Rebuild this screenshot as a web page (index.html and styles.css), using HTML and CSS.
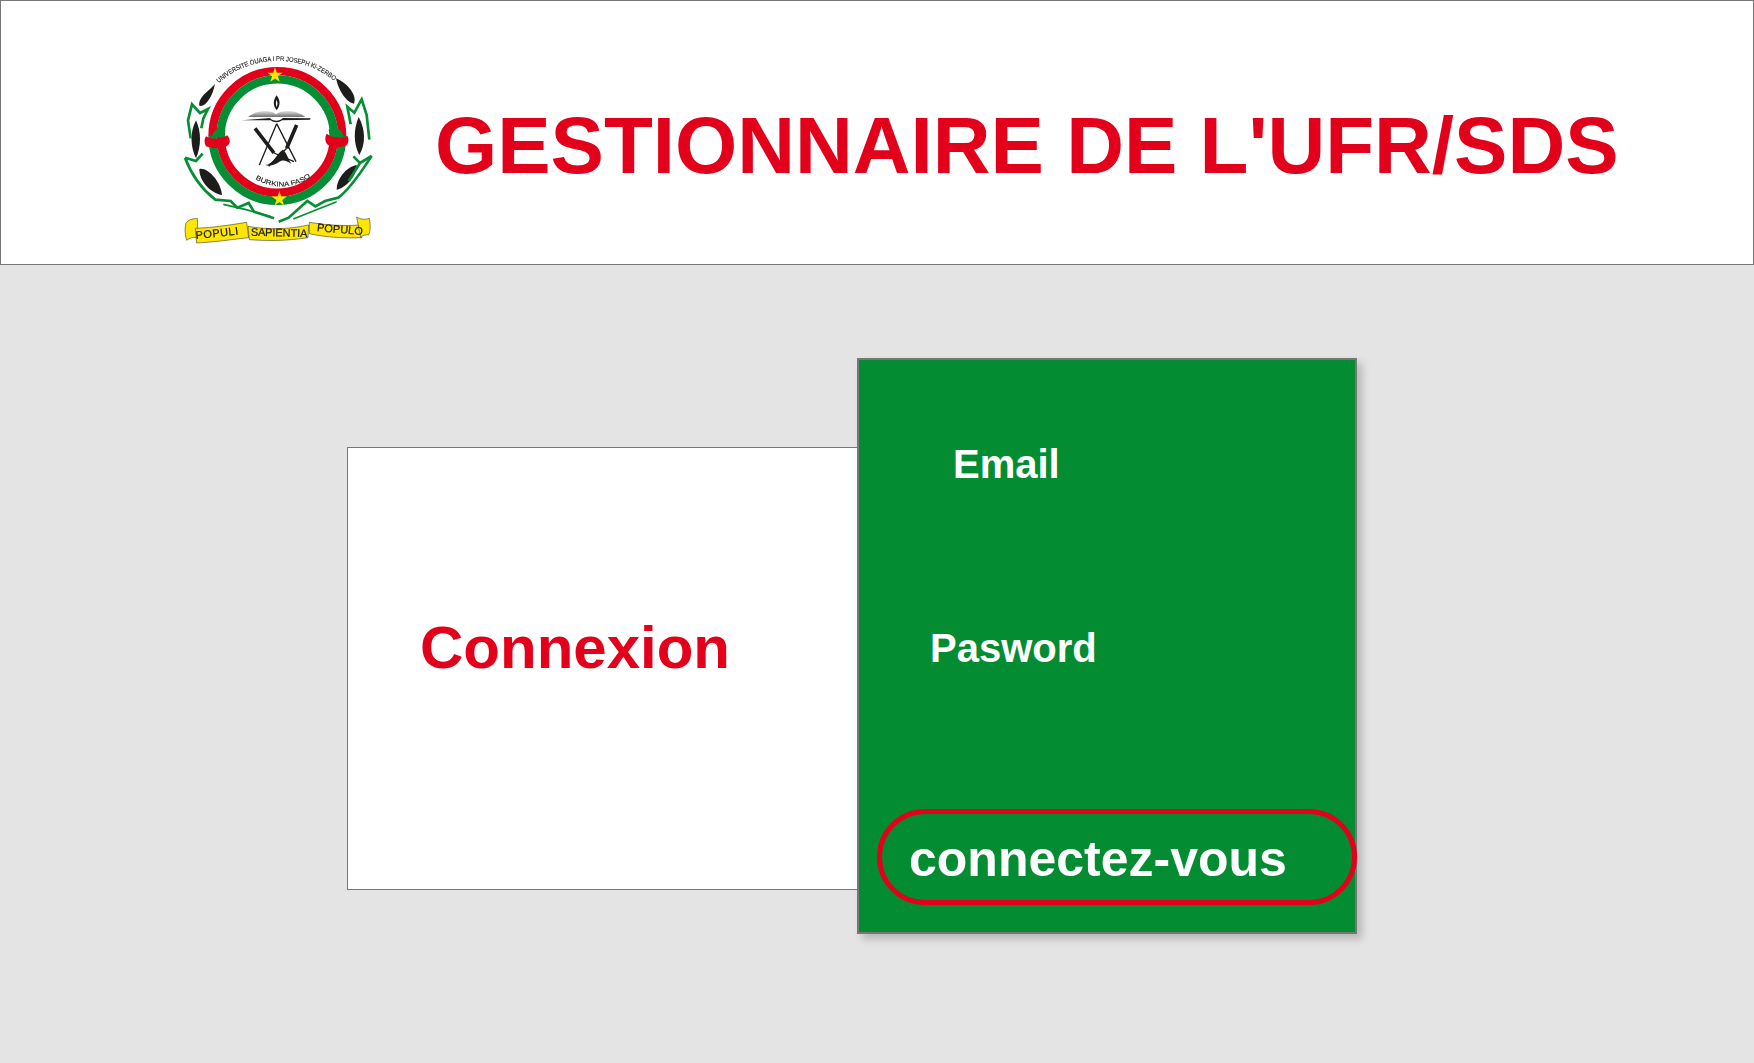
FILE: index.html
```html
<!DOCTYPE html>
<html lang="fr">

<head>
  <meta charset="UTF-8">
  <meta name="viewport" content="width=device-width, initial-scale=1.0">
  <title>Gestionnaire de l'UFR/SDS</title>
  <link rel="stylesheet" href="styles.css">
</head>

<body>
  <div class="header">
    <svg class="logo" viewBox="0 0 660 630" xmlns="http://www.w3.org/2000/svg">
      <defs>
        <path id="arcTop" d="M146 126 A270 270 0 0 1 496 122" />
        <path id="arcBottom" d="M256 414 A150 150 0 0 0 430 402" />
        <polygon id="star" points="0,-24 5.4,-7.4 22.8,-7.4 8.7,2.8 14.1,19.4 0,9.2 -14.1,19.4 -8.7,2.8 -22.8,-7.4 -5.4,-7.4" />
        <linearGradient id="bookGrey" x1="0" y1="0" x2="0" y2="1">
          <stop offset="0" stop-color="#e0e0e0" />
          <stop offset="1" stop-color="#6f6f6f" />
        </linearGradient>
      </defs>

      <!-- ring -->
      <path class="ring-red" d="M127.5 285 A194.5 194.5 0 0 1 516.5 285" />
      <path class="ring-green" d="M152 285 A170 170 0 0 1 492 285" />
      <path class="ring-red" d="M152 285 A170 170 0 0 0 492 285" />
      <path class="ring-green" d="M127.5 285 A194.5 194.5 0 0 0 516.5 285" />
      <use class="star" href="#star" x="315" y="103" />
      <use class="star" href="#star" x="328" y="474" />

      <!-- knots -->
      <path class="green" d="M126 285 C130 268 150 255 166 266 L164 292 Z" />
      <path class="green" d="M520 285 C516 265 494 250 476 266 L480 292 Z" />
      <path class="red" d="M108 286 C125 296 150 296 172 283 C182 294 182 310 170 316 C148 324 122 322 108 316 C102 306 102 294 108 286 Z" />
      <path class="red" d="M470 278 C490 292 512 294 532 284 C538 296 536 310 526 315 C506 320 486 318 474 312 C464 302 464 288 470 278 Z" />

      <!-- book and flame -->
      <path class="ink" d="M320 163 C330 176 333 192 320 208 C307 192 310 176 320 163 Z" />
      <path class="white" d="M320 176 C323 184 323 190 320 198 C317 190 317 184 320 176 Z" />
      <path d="M234 228 C262 206 300 206 318 220 C338 206 378 206 406 228 Z" fill="url(#bookGrey)" />
      <path class="ink" d="M215 238 L300 231 C308 242 330 242 338 231 L422 232 L420 236 L336 238 C328 246 310 246 302 238 Z" />

      <!-- compass and tools -->
      <path class="tool" d="M255 262 L312 336 M380 252 L350 322" />
      <path class="tool-thin" d="M320 248 L268 372 M320 248 L378 362 M312 336 L372 362 M350 322 L296 376" />
      <path class="ink" d="M286 372 C310 370 318 340 338 326 C352 336 352 352 364 368 C350 360 338 354 326 364 C316 372 300 376 286 372 Z" />

      <!-- leaves -->
      <path class="ink" d="M135 128 C122 146 84 166 88 194 C106 200 128 166 135 128 Z" />
      <path class="ink" d="M498 112 C506 150 530 186 552 188 C562 160 530 126 498 112 Z" />
      <path class="ink" d="M78 238 C94 272 94 316 78 352 C60 316 60 272 78 238 Z" />
      <path class="ink" d="M566 228 C586 264 588 308 568 342 C550 308 550 266 566 228 Z" />
      <path class="ink" d="M88 384 C112 378 152 420 156 462 C126 458 88 424 88 384 Z" />
      <path class="ink" d="M560 372 C562 400 530 440 500 446 C500 414 528 378 560 372 Z" />

      <!-- branches -->
      <path class="branch" d="M62 292 L54 238 L66 190 L90 216 L114 204 L100 232 L94 262" />
      <path class="branch" d="M542 250 L532 197 L553 215 L575 175 L590 222 L598 296" />
      <path class="branch" d="M45 350 L78 360 L98 338 M45 350 C60 390 90 440 136 476 L182 480 L202 500 L236 486 L252 512 L312 532" />
      <path class="branch" d="M605 345 C580 382 545 440 505 470 L465 480 L436 496 L412 480 L356 530 L326 542" />
      <path class="branch" d="M605 345 L570 366 L550 346 M570 366 L536 420" />
      <path class="branch-thin" d="M160 490 L228 506 L300 526 M500 482 L430 510 L370 534" />

      <!-- ribbon -->
      <path class="ribbon" d="M48 546 C58 534 68 534 82 532 L84 590 C70 588 58 590 50 598 C44 580 44 562 48 546 Z" />
      <path class="ribbon" d="M76 562 C130 560 180 552 230 544 L236 590 C180 596 130 604 80 606 Z" />
      <path class="ribbon" d="M234 556 C290 566 350 566 416 552 L414 590 C350 600 290 600 238 596 Z" />
      <path class="ribbon" d="M418 544 C470 552 520 556 566 552 L576 590 C530 592 470 590 418 578 Z" />
      <path class="ribbon" d="M560 528 C574 536 586 536 598 532 C602 552 602 570 596 582 C588 580 578 582 572 590 Z" />

      <!-- lettering -->
      <text class="motto-small"><textPath href="#arcTop" textLength="376" lengthAdjust="spacingAndGlyphs">UNIVERSITE OUAGA I PR JOSEPH KI-ZERBO</textPath></text>
      <text class="motto-small"><textPath href="#arcBottom" textLength="176" lengthAdjust="spacingAndGlyphs">BURKINA FASO</textPath></text>
      <text class="motto" x="78" y="594" textLength="128" transform="rotate(-6 78 594)">POPULI</text>
      <text class="motto" x="242" y="584" textLength="170" transform="rotate(1.5 242 584)">SAPIENTIA</text>
      <text class="motto" x="440" y="570" textLength="138" transform="rotate(5 440 570)">POPULO</text>
    </svg>
    <h1>GESTIONNAIRE DE L'UFR/SDS</h1>
  </div>

  <div class="main">
    <div class="intro">
      <h2>Connexion</h2>
    </div>
    <form class="panel">
      <label class="email">Email</label>
      <label class="password">Pasword</label>
      <button class="submit" type="button">connectez-vous</button>
    </form>
  </div>
</body>

</html>
```

FILE: styles.css
```css
html,
body {
  height: 100%;
}

body {
  margin: 0;
  background-color: #e4e4e4;
  font-family: "Liberation Sans", Arial, sans-serif;
  overflow: hidden;
}

.header {
  display: flex;
  align-items: center;
  gap: 45px;
  box-sizing: border-box;
  height: 265px;
  padding: 26px 0 0 169px;
  background: #fff;
  border: 1px solid #777;
}

.logo {
  flex: none;
  width: 220px;
  height: 210px;
  filter: blur(0.35px);
}

.header h1 {
  margin: 0;
  color: #e2001a;
  font-size: 80px;
  font-weight: 700;
  white-space: nowrap;
}

.ring-red {
  fill: none;
  stroke: #e2001a;
  stroke-width: 25;
}

.ring-green {
  fill: none;
  stroke: #058e33;
  stroke-width: 25;
}

.star {
  fill: #ffe600;
}

.red {
  fill: #e2001a;
}

.green {
  fill: #058e33;
}

.ink {
  fill: #1d1d1b;
}

.white {
  fill: #fff;
}

.tool {
  fill: none;
  stroke: #1d1d1b;
  stroke-width: 11;
}

.tool-thin {
  fill: none;
  stroke: #1d1d1b;
  stroke-width: 4;
}

.branch {
  fill: none;
  stroke: #058e33;
  stroke-width: 8;
  stroke-linejoin: miter;
}

.branch-thin {
  fill: none;
  stroke: #058e33;
  stroke-width: 5;
}

.ribbon {
  fill: #ffe600;
  stroke: #1d1d1b;
  stroke-width: 1.5;
}

.motto {
  fill: #1d1d1b;
  stroke: #1d1d1b;
  stroke-width: 0.7;
  font-size: 33px;
}

.motto-small {
  fill: #1d1d1b;
  stroke: #1d1d1b;
  stroke-width: 0.4;
  font-size: 20px;
}

.main {
  display: flex;
  align-items: flex-start;
  padding: 93px 0 0 347px;
}

.intro {
  box-sizing: border-box;
  width: 510px;
  height: 443px;
  margin-top: 89px;
  padding: 165px 0 0 72px;
  background: #fff;
  border: 1px solid #777;
  border-right: 0;
}

.intro h2 {
  margin: 0;
  color: #e2001a;
  font-size: 60px;
  line-height: 70px;
  font-weight: 700;
}

.panel {
  display: flex;
  flex-direction: column;
  align-items: flex-start;
  gap: 138px;
  box-sizing: border-box;
  width: 500px;
  height: 576px;
  padding: 81px 0 0 18px;
  background: #048c32;
  border: 2px solid #777;
  box-shadow: 5px 5px 8px rgba(0, 0, 0, 0.2);
}

.panel label {
  color: #fff;
  font-size: 40px;
  line-height: 46px;
  font-weight: 700;
}

.email {
  margin-left: 76px;
}

.password {
  margin-left: 53px;
}

.submit {
  box-sizing: border-box;
  width: 480px;
  height: 96px;
  padding: 4px 0 0 27px;
  background: transparent;
  border: 5px solid #e2001a;
  border-radius: 48px;
  color: #fff;
  font-family: inherit;
  font-size: 50px;
  font-weight: 700;
  text-align: left;
}
```
